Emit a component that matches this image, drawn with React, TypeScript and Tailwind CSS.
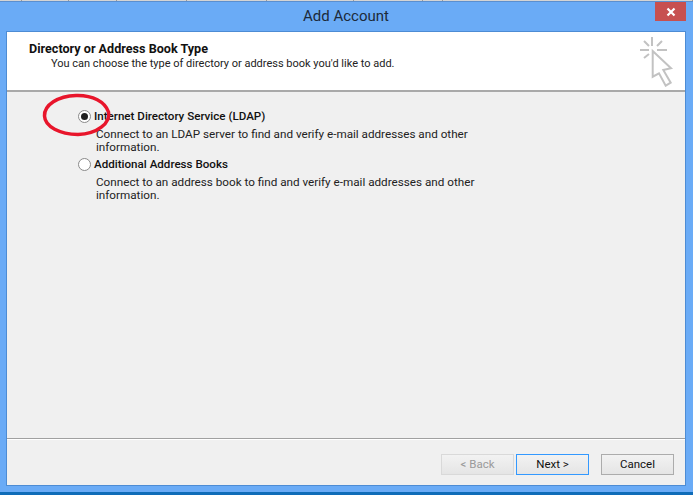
const segs = [22, 47, 48, 70, 80, 87, 69, 20, 250];
const font = { fontFamily: 'Roboto, "Noto Sans", sans-serif' };

function Radio({ checked }: { checked?: boolean }) {
  return (
    <span className="flex h-[13px] w-[13px] shrink-0 items-center justify-center rounded-full border border-[#8a8a8a] bg-white">
      {checked && <span className="h-[7px] w-[7px] rounded-full bg-[#1f1f1f]" />}
    </span>
  );
}

function Option({ label, desc, checked }: { label: string; desc: string; checked?: boolean }) {
  return (
    <div className="flex flex-col">
      <div className="flex h-[13px] items-center gap-[3px]">
        <Radio checked={checked} />
        <span className="text-[11.6px] font-medium leading-[13px] text-[#111]">{label}</span>
      </div>
      <p className="ml-[18px] mt-[5px] w-[390px] text-[11.7px] leading-[13px] text-[#222]">{desc}</p>
    </div>
  );
}

function Btn({ children, cls }: { children: string; cls: string }) {
  return (
    <button className={`flex h-[21px] w-[73px] items-center justify-center border bg-gradient-to-b from-[#f2f2f2] to-[#e5e5e5] text-[11.5px] ${cls}`}>
      {children}
    </button>
  );
}

export default function App() {
  return (
    <div className="relative flex h-[495px] w-[693px] flex-col overflow-hidden bg-[#6aabf6]" style={font}>
      <div className="flex h-[1px] bg-[#d4d4d4]">
        {segs.map((w, i) => (
          <div key={i} className="h-full border-r border-[#9a9a9a]" style={{ width: w }} />
        ))}
      </div>
      <div className="h-[1px] bg-[#5b8fcf]" />
      <div className="grid h-[29px] grid-cols-[1fr_auto_1fr] pl-[6px] pr-[7px]">
        <div />
        <div className="flex h-[29px] items-center text-[15px] leading-none text-[#1c2a3a]">Add Account</div>
        <div className="flex justify-end">
          <div className="flex h-[19px] w-[31px] items-center justify-center bg-[#c75050]">
            <svg width="10" height="10" viewBox="0 0 10 10">
              <path d="M1.5 1.5 8.5 8.5M8.5 1.5 1.5 8.5" stroke="#fff" strokeWidth="2.2" />
            </svg>
          </div>
        </div>
      </div>
      <div className="ml-[6px] mr-[7px] flex h-[455px] flex-col border border-[#4d8cd4] bg-[#f0f0f0]">
        <div className="flex h-[58px] justify-between bg-white pl-[22px] pr-[9px] pt-[10px]">
          <div>
            <div className="text-[12.6px] font-bold leading-[14px] text-[#111]">Directory or Address Book Type</div>
            <div className="ml-[22px] mt-[1px] text-[11px] leading-[14px] text-[#222]">
              You can choose the type of directory or address book you'd like to add.
            </div>
          </div>
          <svg className="-mt-[7px] shrink-0" width="36" height="52" viewBox="638 35 36 52" fill="none" stroke="#c2c2c2" strokeWidth="2">
            <path d="M650 37V46M638 50H647M655 50H665M642 41 647 46M660 41 655 46M642 58 647 54" />
            <path d="M650.7 51 669 68.3 661.3 70 668.7 82.7 663.7 85.7 657 73.3 650.7 76.7Z" strokeLinejoin="miter" />
          </svg>
        </div>
        <div className="h-[2px] bg-[#a9a9a9]" />
        <div className="flex flex-1 flex-col gap-[4px] pl-[71px] pt-[18px]">
          <Option
            checked
            label="Internet Directory Service (LDAP)"
            desc="Connect to an LDAP server to find and verify e-mail addresses and other information."
          />
          <Option
            label="Additional Address Books"
            desc="Connect to an address book to find and verify e-mail addresses and other information."
          />
        </div>
        <div className="h-[1px] bg-[#a0a0a0]" />
        <div className="h-[1px] bg-white" />
        <div className="flex h-[45px] items-start justify-end pr-[11px] pt-[14px]">
          <Btn cls="border-[#d9d9d9] text-[#9a9a9a]">{"< Back"}</Btn>
          <Btn cls="ml-[2px] border-[#3399ff] text-[#111]">{"Next >"}</Btn>
          <Btn cls="ml-[12px] border-[#acacac] text-[#111]">Cancel</Btn>
        </div>
      </div>
      <div className="flex-1" />
      <div className="h-[3px] bg-[#0f6cb8]" />
      <svg className="pointer-events-none absolute left-0 top-0" width="693" height="495" fill="none">
        <path
          d="M44.5 116C44 105 58 96 76 95.5 93 95 105 102 108.5 112 111 123 97 134 78 134.5 60 134 45 127 44.5 116Z"
          stroke="#e8152b"
          strokeWidth="3.5"
        />
      </svg>
    </div>
  );
}
